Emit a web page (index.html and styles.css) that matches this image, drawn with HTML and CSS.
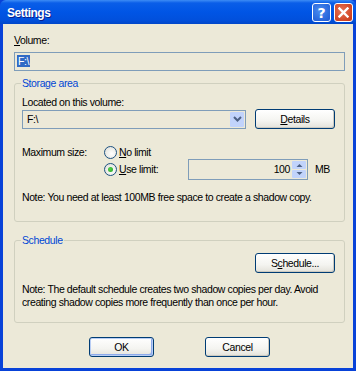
FILE: index.html
```html
<!DOCTYPE html>
<html lang="en">
<head>
    <meta charset="UTF-8">
    <title>Settings</title>
    <link rel="stylesheet" href="styles.css">
</head>
<body>
    <div class="window">
        <div class="titlebar">
            <span class="title">Settings</span>
            <div class="caption-buttons">
                <span class="cap-btn help">?</span>
                <span class="cap-btn close">
                    <svg width="11" height="11" viewBox="0 0 11 11"><path d="M1.5 1.5 L9.5 9.5 M9.5 1.5 L1.5 9.5" stroke="#fff" stroke-width="2.4" stroke-linecap="square"/></svg>
                </span>
            </div>
        </div>

        <div class="client">
            <div class="label"><u>V</u>olume:</div>
            <div class="textbox"><span class="selected">F:\</span></div>

            <fieldset class="group storage">
                <legend>Storage area</legend>
                <div class="label">Located on this volume:</div>
                <div class="row combo-row">
                    <div class="combo">
                        <span class="combo-value">F:\</span>
                        <span class="combo-arrow">
                            <svg width="9" height="6" viewBox="0 0 9 6"><path d="M1 1 L4.5 4.5 L8 1" fill="none" stroke="#4d6185" stroke-width="2"/></svg>
                        </span>
                    </div>
                    <button class="btn"><u>D</u>etails</button>
                </div>

                <div class="row size-row">
                    <div class="size-label">Maximum size:</div>
                    <div class="options">
                        <div class="option">
                            <span class="radio"></span>
                            <span><u>N</u>o limit</span>
                        </div>
                        <div class="option">
                            <span class="radio checked"></span>
                            <span class="limit-label"><u>U</u>se limit:</span>
                            <div class="spinbox">
                                <span class="spin-value">100</span>
                                <span class="spin-buttons">
                                    <span class="spin"><svg width="7" height="4" viewBox="0 0 7 4"><path d="M0.5 4 L3.5 1 L6.5 4Z" fill="#4d6185"/></svg></span>
                                    <span class="spin"><svg width="7" height="4" viewBox="0 0 7 4"><path d="M0.5 0 L3.5 3 L6.5 0Z" fill="#4d6185"/></svg></span>
                                </span>
                            </div>
                            <span class="unit">MB</span>
                        </div>
                    </div>
                </div>

                <p class="note">Note: You need at least 100MB free space to create a shadow copy.</p>
            </fieldset>

            <fieldset class="group schedule">
                <legend>Schedule</legend>
                <div class="row right">
                    <button class="btn">S<u>c</u>hedule...</button>
                </div>
                <p class="note">Note: The default schedule creates two shadow copies per day. Avoid creating shadow copies more frequently than once per hour.</p>
            </fieldset>

            <div class="footer">
                <button class="btn wide default">OK</button>
                <button class="btn wide">Cancel</button>
            </div>
        </div>
    </div>
</body>
</html>
```

FILE: styles.css
```css
body {
    margin: 0;
    font-family: "Liberation Sans", Arial, sans-serif;
    font-size: 10.5px;
    letter-spacing: -0.4px;
    color: #000;
    background: #ece9d8;
}

.window {
    width: 356px;
    height: 371px;
    box-sizing: border-box;
    background: #0842d8;
    padding: 0 3px 3px 3px;
    display: flex;
    flex-direction: column;
}

.titlebar {
    height: 24px;
    margin: 0 -3px;
    padding: 0 3px 0 7px;
    display: flex;
    align-items: center;
    justify-content: space-between;
    background: linear-gradient(#3d8cf5 0px, #0a5ee8 3px, #0055e5 12px, #0150dc 20px, #0147c9 24px);
    border-radius: 6px 6px 0 0;
}

.title {
    color: #fff;
    font-weight: bold;
    font-size: 12px;
    letter-spacing: -0.5px;
    text-shadow: 1px 1px 0 #0a1e8c;
    padding-top: 1px;
}

.caption-buttons {
    display: flex;
    gap: 3px;
    padding-top: 1px;
}

.cap-btn {
    width: 19px;
    height: 19px;
    box-sizing: border-box;
    border: 1px solid #fff;
    border-radius: 3px;
    display: flex;
    align-items: center;
    justify-content: center;
    color: #fff;
    font-weight: bold;
    font-size: 14px;
    letter-spacing: 0;
    font-family: "DejaVu Sans", sans-serif;
}

.cap-btn.help {
    background: radial-gradient(circle at 40% 40%, #4a8cf0, #2461d8 80%);
}

.cap-btn.close {
    background: radial-gradient(circle at 40% 40%, #e87356, #cc3f1e 80%);
}

.client {
    flex: 1;
    background: #ece9d8;
    padding: 10px 8px 0 11px;
}

.label {
    line-height: 13px;
}

.textbox {
    margin-top: 5px;
    height: 19px;
    box-sizing: border-box;
    border: 1px solid #7f9db9;
    background: #ece9d8;
    padding: 2px 0 0 2px;
    line-height: 13px;
}

.selected {
    background: #316ac5;
    color: #fff;
    padding: 0 1px;
}

.group {
    margin: 6px 0 0 0;
    border: 1px solid #d0d0bf;
    border-radius: 3px;
    padding: 6px 9px 0 7px;
}

.group legend {
    color: #0046d5;
    padding: 0 1px;
    margin-left: -1px;
    line-height: 13px;
}

.row {
    display: flex;
    align-items: center;
}

.combo-row {
    gap: 9px;
}

.combo {
    width: 224px;
    height: 19px;
    box-sizing: border-box;
    border: 1px solid #7f9db9;
    display: flex;
    align-items: center;
    justify-content: space-between;
    padding: 1px 1px 1px 4px;
}

.combo-arrow {
    width: 14px;
    height: 15px;
    background: #c1d3fb;
    border-radius: 1px;
    display: flex;
    align-items: center;
    justify-content: center;
}

.btn {
    font-family: inherit;
    font-size: 10.5px;
    letter-spacing: -0.4px;
    height: 20px;
    width: 80px;
    padding: 0;
    border: 1px solid #003c74;
    border-radius: 3px;
    background: linear-gradient(#ffffff, #f4f4f0 60%, #e3e2da);
    box-shadow: inset -1px -1px 0 #cdcac0;
    color: #000;
}

.btn.wide {
    width: 65px;
}

.btn.default {
    box-shadow: inset 0 0 0 1px #b8cdf4, inset -2px -2px 0 #8daaeb;
}

.size-row {
    align-items: flex-start;
    margin-top: 17px;
}

.size-label {
    width: 82px;
    line-height: 13px;
}

.options {
    display: flex;
    flex-direction: column;
}

.option {
    display: flex;
    align-items: center;
    gap: 2px;
    line-height: 13px;
}

.radio {
    width: 11px;
    height: 11px;
    border: 1px solid #1c5180;
    border-radius: 50%;
    background: radial-gradient(circle at 60% 60%, #fff, #dcdcd4);
    display: flex;
    align-items: center;
    justify-content: center;
}

.radio.checked::after {
    content: "";
    width: 5px;
    height: 5px;
    border-radius: 50%;
    background: radial-gradient(circle at 40% 40%, #55d24a, #21a121);
}

.limit-label {
    width: 67px;
}

.spinbox {
    width: 120px;
    height: 21px;
    box-sizing: border-box;
    border: 1px solid #7f9db9;
    display: flex;
    align-items: center;
    justify-content: flex-end;
    padding: 1px;
}

.spin-value {
    margin-right: 2px;
}

.spin-buttons {
    display: flex;
    flex-direction: column;
    gap: 1px;
    height: 100%;
}

.spin {
    width: 14px;
    flex: 1;
    background: #c1d3fb;
    display: flex;
    align-items: center;
    justify-content: center;
    border-radius: 1px;
}

.unit {
    margin-left: 5px;
}

.note {
    margin: 11px 0 17px 0;
    line-height: 13px;
}

.schedule {
    margin-top: 12px;
}

.right {
    justify-content: flex-end;
}

.schedule .note {
    margin: 10px 0 13px 0;
}

.footer {
    display: flex;
    justify-content: center;
    gap: 51px;
    margin-top: 14px;
}
```
